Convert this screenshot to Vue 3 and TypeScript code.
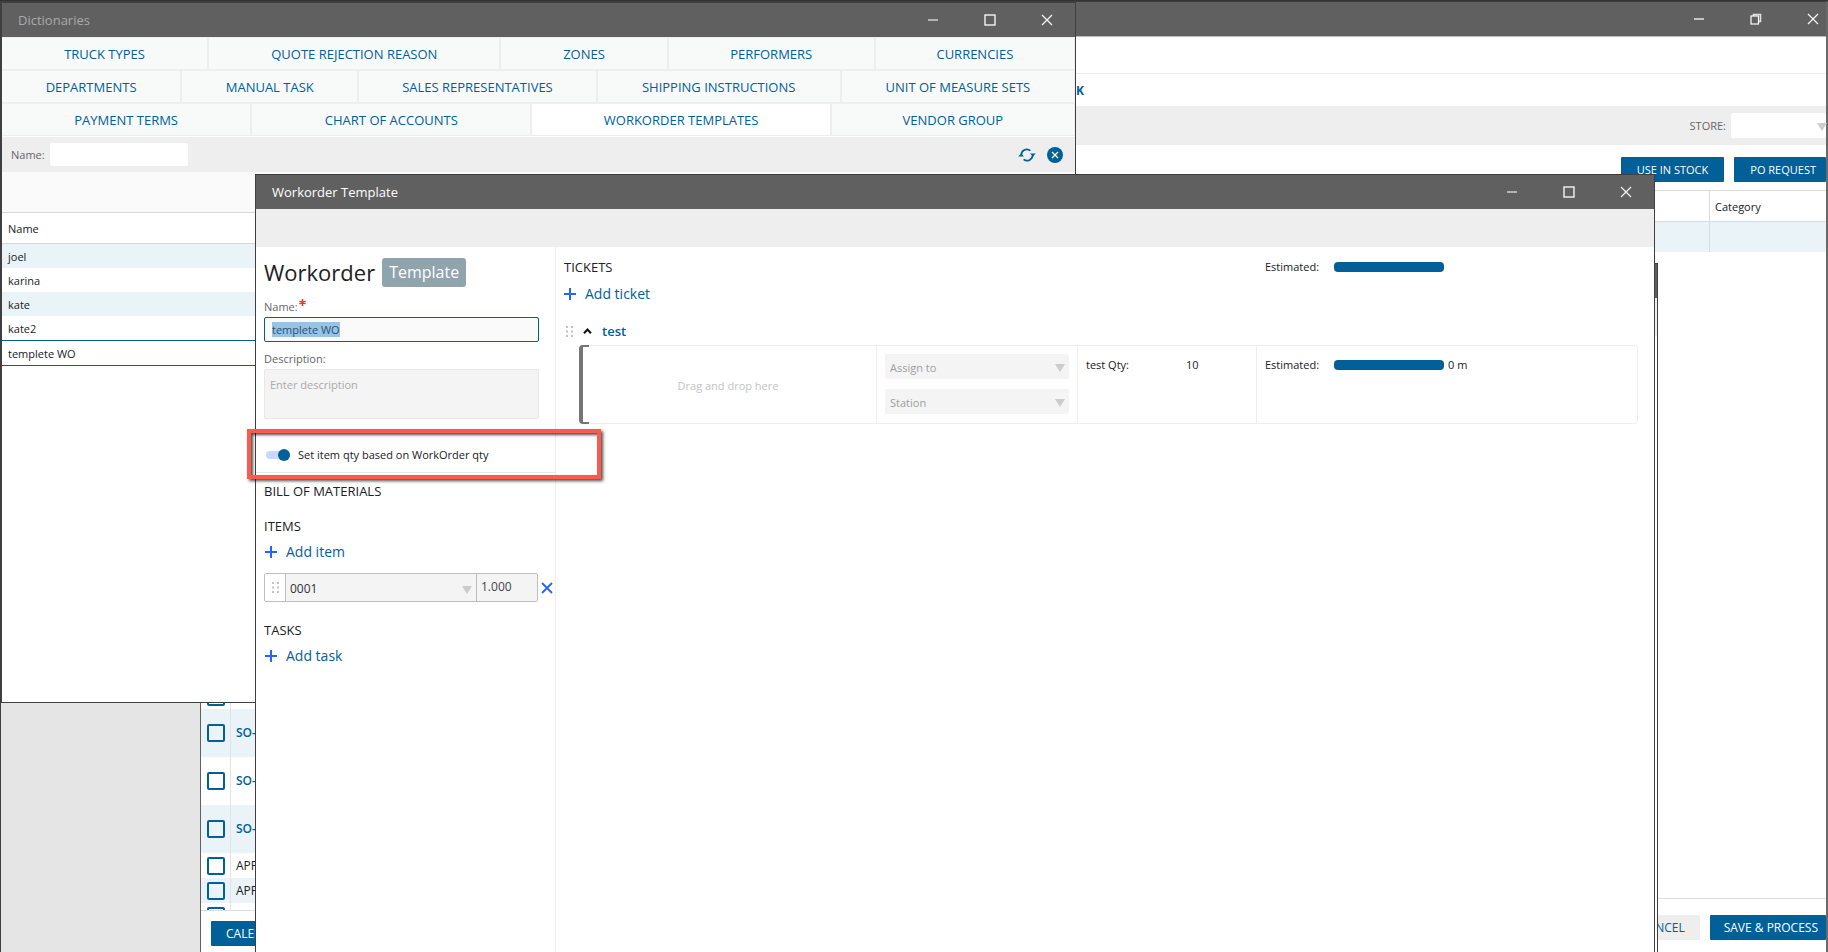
<script setup lang="ts">
import { onMounted, ref } from 'vue'

interface Tab { label: string; active?: boolean }
interface TabRow { id: string; tabs: Tab[] }

const tabRows: TabRow[] = [
  { id: 'r1', tabs: [{ label: 'TRUCK TYPES' }, { label: 'QUOTE REJECTION REASON' }, { label: 'ZONES' }, { label: 'PERFORMERS' }, { label: 'CURRENCIES' }] },
  { id: 'r2', tabs: [{ label: 'DEPARTMENTS' }, { label: 'MANUAL TASK' }, { label: 'SALES REPRESENTATIVES' }, { label: 'SHIPPING INSTRUCTIONS' }, { label: 'UNIT OF MEASURE SETS' }] },
  { id: 'r3', tabs: [{ label: 'PAYMENT TERMS' }, { label: 'CHART OF ACCOUNTS' }, { label: 'WORKORDER TEMPLATES', active: true }, { label: 'VENDOR GROUP' }] },
]

const names: string[] = ['joel', 'karina', 'kate', 'kate2', 'templete WO']

const orders = [
  { id: 1, text: '', tall: false },
  { id: 2, text: 'SO-', tall: true },
  { id: 3, text: 'SO-', tall: true },
  { id: 4, text: 'SO-', tall: true },
  { id: 5, text: 'APP', tall: false },
  { id: 6, text: 'APP', tall: false },
  { id: 7, text: '', tall: false },
]

const templateName = ref('templete WO')
const description = ref('')
const qtyBased = ref(true)
const itemQty = ref('1.000')
const filterName = ref('')
const nameInput = ref<HTMLInputElement | null>(null)

onMounted(() => {
  nameInput.value?.focus()
  nameInput.value?.select()
})
</script>

<template>
  <div class="desktop">
    <!-- Main application window -->
    <section class="window main-window" aria-label="Main window">
      <header class="titlebar">
        <span class="title"></span>
        <div class="controls">
          <button type="button" aria-label="Minimize"><svg width="12" height="12" viewBox="0 0 12 12"><path d="M1 6h10" stroke="#c4c4c4" stroke-width="2" /></svg></button>
          <button type="button" aria-label="Restore"><svg width="12" height="12" viewBox="0 0 12 12"><path d="M3.5 3V1.5h7v7H9" fill="none" stroke="#e0e0e0" stroke-width="1.6" /><rect x="1" y="3" width="7.5" height="8" fill="none" stroke="#fff" stroke-width="1.2" /></svg></button>
          <button type="button" aria-label="Close"><svg width="12" height="12" viewBox="0 0 12 12"><path d="M1 1l10 10M11 1L1 11" stroke="#f4f4f4" stroke-width="1.3" /></svg></button>
        </div>
      </header>
      <div class="menu-strip"></div>
      <nav class="main-tabs"><a href="#stock">STOCK</a></nav>
      <div class="store-bar">
        <label for="store">STORE:</label>
        <span class="select-wrap store-select">
          <select id="store"><option></option></select>
          <svg class="arrow" width="10" height="8" viewBox="0 0 10 8"><path d="M0 0h10L5 8z" /></svg>
        </span>
      </div>
      <div class="main-body">
        <aside class="side"></aside>
        <div class="orders-pane">
          <div class="orders-view">
            <table class="orders">
              <tbody>
                <tr v-for="o in orders" :key="o.id" :class="{ tall: o.tall }">
                  <td class="check"><input type="checkbox" :aria-label="'Select row ' + o.id" /></td>
                  <td class="order-id">{{ o.text }}</td>
                </tr>
              </tbody>
            </table>
          </div>
          <footer class="orders-foot"><button type="button" class="primary">CALENDAR</button></footer>
        </div>
        <div class="detail-pane">
          <div class="actions">
            <button type="button" class="primary">USE IN STOCK</button>
            <button type="button" class="primary">PO REQUEST</button>
          </div>
          <table class="stock">
            <thead><tr><th></th><th class="category">Category</th></tr></thead>
            <tbody><tr><td></td><td></td></tr></tbody>
          </table>
          <footer class="detail-foot">
            <button type="button" class="secondary">CANCEL</button>
            <button type="button" class="primary">SAVE &amp; PROCESS</button>
          </footer>
        </div>
      </div>
    </section>

    <!-- Dictionaries window -->
    <section class="window dict-window" aria-label="Dictionaries">
      <header class="titlebar">
        <span class="title dim">Dictionaries</span>
        <div class="controls">
          <button type="button" aria-label="Minimize"><svg width="12" height="12" viewBox="0 0 12 12"><path d="M1 6h10" stroke="#b4b4b4" stroke-width="2" /></svg></button>
          <button type="button" aria-label="Maximize"><svg width="12" height="12" viewBox="0 0 12 12"><rect x="1" y="1" width="10" height="10" fill="none" stroke="#f4f4f4" stroke-width="1.4" /></svg></button>
          <button type="button" aria-label="Close"><svg width="12" height="12" viewBox="0 0 12 12"><path d="M1 1l10 10M11 1L1 11" stroke="#f4f4f4" stroke-width="1.3" /></svg></button>
        </div>
      </header>
      <nav class="dict-tabs">
        <div v-for="row in tabRows" :key="row.id" class="tab-row" :class="row.id">
          <button v-for="t in row.tabs" :key="t.label" type="button" :class="{ active: t.active }">{{ t.label }}</button>
        </div>
      </nav>
      <div class="filter-bar">
        <label for="filter">Name:</label>
        <input id="filter" v-model="filterName" type="text" />
        <div class="filter-icons">
          <button type="button" aria-label="Refresh">
            <svg width="18" height="14" viewBox="0 0 18 14">
              <path d="M3.3 7.500A5.600 5.600 0 0 1 12.400 2.700M14.700 6.500A5.600 5.600 0 0 1 5.600 11.300" fill="none" stroke="#006097" stroke-width="1.7" />
              <path d="M0.2 8.600h5.800L3.100 5.600zM12 5.400h5.800L14.900 8.400z" transform="translate(0 0)" fill="#006097" />
            </svg>
          </button>
          <button type="button" aria-label="Clear">
            <svg width="16" height="16" viewBox="0 0 16 16"><circle cx="8" cy="8" r="8" fill="#006097" /><path d="M5 5l6 6M11 5l-6 6" stroke="#fff" stroke-width="1.3" /></svg>
          </button>
        </div>
      </div>
      <div class="group-area"></div>
      <table class="names">
        <thead><tr><th>Name</th></tr></thead>
        <tbody>
          <tr v-for="n in names" :key="n" :class="{ selected: n === 'templete WO' }"><td>{{ n }}</td></tr>
        </tbody>
      </table>
    </section>

    <!-- Window lying under the template editor -->
    <section class="window under-window" aria-hidden="true">
      <div class="titlebar"></div>
      <div class="tool-strip"></div>
    </section>

    <!-- Workorder template window -->
    <section class="window wo-window" aria-label="Workorder Template">
      <header class="titlebar">
        <span class="title">Workorder Template</span>
        <div class="controls">
          <button type="button" aria-label="Minimize"><svg width="12" height="12" viewBox="0 0 12 12"><path d="M1 6h10" stroke="#b4b4b4" stroke-width="2" /></svg></button>
          <button type="button" aria-label="Maximize"><svg width="12" height="12" viewBox="0 0 12 12"><rect x="1" y="1" width="10" height="10" fill="none" stroke="#f4f4f4" stroke-width="1.4" /></svg></button>
          <button type="button" aria-label="Close"><svg width="12" height="12" viewBox="0 0 12 12"><path d="M1 1l10 10M11 1L1 11" stroke="#f4f4f4" stroke-width="1.3" /></svg></button>
        </div>
      </header>
      <div class="tool-strip"></div>
      <div class="wo-body">
        <div class="wo-left">
          <div class="wo-form">
            <div class="heading"><h1>Workorder</h1><span class="badge">Template</span></div>
            <label class="field-label" for="wo-name">Name:<svg class="star" width="7" height="7" viewBox="0 0 8 8"><path d="M4 0v8M0.4 2.4l7.2 3.2M7.6 2.4L0.4 5.6" stroke="#e53935" stroke-width="1.8" /></svg></label>
            <input id="wo-name" ref="nameInput" v-model="templateName" class="name-input" type="text" />
            <label class="field-label desc-label" for="wo-desc">Description:</label>
            <textarea id="wo-desc" v-model="description" placeholder="Enter description"></textarea>
          </div>
          <div class="switch-row">
            <label class="switch"><input v-model="qtyBased" type="checkbox" /><span class="track"></span><span>Set item qty based on WorkOrder qty</span></label>
            <div class="callout"></div>
          </div>
          <div class="materials">
            <h2>BILL OF MATERIALS</h2>
            <h2 class="items-title">ITEMS</h2>
            <button type="button" class="add"><svg width="12" height="12" viewBox="0 0 12 12"><path d="M6 0v12M0 6h12" stroke="#2962ff" stroke-width="2" /></svg>Add item</button>
            <div class="item-row">
              <div class="item-box">
                <span class="grip-cell"><svg width="7" height="11" viewBox="0 0 7 11"><path d="M0 0h2v2H0zM5 0h2v2H5zM0 4.500h2v2H0zM5 4.500h2v2H5zM0 9h2v2H0zM5 9h2v2H5z" fill="#c2c2c2" /></svg></span>
                <span class="select-wrap item-select">
                  <select aria-label="Item"><option>0001</option></select>
                  <svg class="arrow" width="10" height="8" viewBox="0 0 10 8"><path d="M0 0h10L5 8z" /></svg>
                </span>
                <input v-model="itemQty" type="text" aria-label="Item quantity" />
              </div>
              <button type="button" class="remove" aria-label="Remove item"><svg width="12" height="12" viewBox="0 0 12 12"><path d="M1 1l10 10M11 1L1 11" stroke="#2962ff" stroke-width="1.8" /></svg></button>
            </div>
            <h2 class="tasks-title">TASKS</h2>
            <button type="button" class="add"><svg width="12" height="12" viewBox="0 0 12 12"><path d="M6 0v12M0 6h12" stroke="#2962ff" stroke-width="2" /></svg>Add task</button>
          </div>
        </div>
        <div class="wo-right">
          <div class="tickets-head">
            <h2>TICKETS</h2>
            <div class="estimate"><span class="est-label">Estimated:</span><span class="bar"></span></div>
          </div>
          <button type="button" class="add add-ticket"><svg width="12" height="12" viewBox="0 0 12 12"><path d="M6 0v12M0 6h12" stroke="#2962ff" stroke-width="2" /></svg>Add ticket</button>
          <div class="ticket-title">
            <svg width="7" height="11" viewBox="0 0 7 11"><path d="M0 0h2v2H0zM5 0h2v2H5zM0 4.500h2v2H0zM5 4.500h2v2H5zM0 9h2v2H0zM5 9h2v2H5z" fill="#c2c2c2" /></svg>
            <svg width="9" height="6" viewBox="0 0 9 6"><path d="M1 5.200L4.500 1.500 8 5.200" fill="none" stroke="#111" stroke-width="2" /></svg>
            <a href="#test">test</a>
          </div>
          <div class="ticket">
            <div class="drop">Drag and drop here</div>
            <div class="assign">
              <span class="select-wrap"><select aria-label="Assign to"><option>Assign to</option></select><svg class="arrow" width="10" height="8" viewBox="0 0 10 8"><path d="M0 0h10L5 8z" /></svg></span>
              <span class="select-wrap"><select aria-label="Station"><option>Station</option></select><svg class="arrow" width="10" height="8" viewBox="0 0 10 8"><path d="M0 0h10L5 8z" /></svg></span>
            </div>
            <div class="qty"><span class="qty-label">test Qty:</span><span>10</span></div>
            <div class="estimate"><span class="est-label">Estimated:</span><span class="bar"></span><span>0 m</span></div>
          </div>
        </div>
      </div>
    </section>
  </div>
</template>

<style>
body { margin: 0; }
</style>

<style scoped>
.desktop {
  position: relative;
  height: 100vh;
  overflow: hidden;
  background: #333;
  color: #212121;
  font: 11px/16px "Open Sans", "Noto Sans", sans-serif;
}
.desktop * { box-sizing: border-box; }
button, input, select, textarea { font: inherit; color: inherit; margin: 0; border-radius: 0; }
button { padding: 0; border: 0; background: none; cursor: pointer; }
a { text-decoration: none; color: #006097; }
table { border-collapse: separate; border-spacing: 0; width: 100%; }
h1, h2 { margin: 0; font-weight: 400; }
h2 { font-size: 13px; line-height: 16px; font-weight: 500; }

.window { position: absolute; display: flex; flex-direction: column; background: #fff; border: 1px solid #3f3f3f; }
.titlebar { display: flex; align-items: center; justify-content: space-between; flex: none; height: 34px; padding: 0 22px 0 16px; background: #606060; color: #fff; font-size: 13px; }
.dim { color: #aaa; }
.controls { display: flex; gap: 45px; }
.controls button, .filter-icons button { display: flex; }
.tool-strip { flex: none; height: 38px; background: #eee; }

.main-window { inset: 1px 0 0; border-width: 1px 2px 0 1px; border-right-color: #696969; }
.main-window .titlebar { padding-right: 7px; }
.menu-strip { flex: none; height: 38px; border-top: 1px solid #bbb; border-bottom: 1px solid #eee; }
.main-tabs { flex: none; width: 1083px; height: 32px; padding-top: 9px; text-align: right; font-size: 12px; font-weight: 700; }
.store-bar { display: flex; flex: none; justify-content: flex-end; align-items: center; gap: 5px; height: 39px; background: #eee; color: #666; }
.store-select { width: 95px; }
.main-body { display: flex; flex: 1; min-height: 0; }
.side { width: 200px; flex: none; background: #e5e5e5; border-right: 1px solid #606060; }
.orders-pane { display: flex; flex-direction: column; justify-content: flex-end; width: 30%; font-size: 12px; }
.orders-view { height: 226px; overflow: hidden; }
.orders td { height: 25px; padding: 0 5px; }
.orders tr.tall td { height: 48px; color: #006097; font-weight: 600; }
.orders tr:nth-child(even) { background: #eaf3f7; }
.orders td.check { width: 30px; padding: 0 5px 0 6px; border-right: 1px solid #dfe3e5; }
.orders .check input { display: block; appearance: none; width: 18px; height: 18px; border: 2px solid #006097; border-radius: 2px; }
.orders-foot { height: 42px; padding: 10px; border-top: 1px solid #ddd; }
.detail-pane { display: flex; flex-direction: column; flex: 1; }
.actions { display: flex; justify-content: flex-end; gap: 10px; padding-top: 12px; height: 45px; }
.primary, .secondary { height: 25px; padding: 0 15px; background: #006097; color: #fff; border-radius: 1px; white-space: nowrap; }
.secondary { background: #eee; color: #006097; }
.actions .primary { padding: 0 16px; }
.actions .primary:last-child { padding-right: 10px; }
.stock th { height: 32px; padding: 2px 5px 0; border: solid #d8dcde; border-width: 1px 0; text-align: left; font-weight: 400; }
.stock td { height: 30px; background: #eaf3f7; }
.stock tr > :last-child { width: 117px; border-left: 1px solid #d8dcde; }
.detail-foot { display: flex; justify-content: flex-end; gap: 10px; height: 54px; margin-top: auto; padding-top: 16px; border-top: 1px solid #ddd; font-size: 12px; }
.detail-foot .primary { padding: 0 8px 0 14px; }

.select-wrap { position: relative; display: block; }
.select-wrap select { display: block; appearance: none; width: 100%; height: 25px; padding: 2px 20px 0 5px; border: 0; border-radius: 2px; background: #f4f4f4; color: #9e9e9e; }
.arrow { position: absolute; right: 4px; top: 10px; fill: #ccc; pointer-events: none; }
.store-bar .select-wrap select { background: #fff; }
.store-bar .arrow { right: -1px; }

.dict-window { left: 1px; top: 2px; width: 1075px; height: 701px; }
.dict-tabs { display: grid; gap: 2px; flex: none; padding: 1px 1px 1px 0; background: #eee; border-bottom: 1px solid #fff; }
.tab-row { display: grid; gap: 2px; }
.r1 { grid-template-columns: 205fr 290fr 165fr 205fr 198fr; }
.r2 { grid-template-columns: 178fr 175fr 236fr 242fr 232fr; }
.r3 { grid-template-columns: 248fr 278fr 297fr 242fr; }
.tab-row button { height: 31px; background: #f8faf9; color: #006097; font-size: 13px; font-weight: 500; white-space: nowrap; }
.tab-row button.active { background: #fff; }
.filter-bar { display: flex; align-items: center; flex: none; gap: 5px; height: 35px; padding: 0 12px 0 9px; background: #eee; color: #666; }
.filter-bar input { width: 138px; height: 23px; border: 0; border-radius: 2px; background: #fff; }
.filter-icons { display: flex; align-items: center; gap: 11px; margin-left: auto; }
.group-area { flex: none; height: 40px; background: #fafafa; }
.names th { height: 32px; padding: 2px 6px 0; text-align: left; font-weight: 400; border: solid #d8d8d8; border-width: 1px 0; }
.names td { height: 24px; padding: 2px 6px 0; }
.names tbody tr:nth-child(odd) td { background: #eaf3f7; }
.names tbody tr.selected td { height: 26px; background: #fff; border: solid #006097; border-width: 1px 0; }

.under-window { left: 258px; right: 170px; top: 263px; bottom: 0; border-bottom: 0; }

.wo-window { left: 255px; right: 173px; top: 174px; bottom: 0; border-bottom: 0; }
.wo-body { display: flex; flex: 1; min-height: 0; }
.wo-left { width: 300px; flex: none; border-right: 1px solid #eee; }
.wo-form { display: flex; flex-direction: column; padding: 11px 16px 0 8px; }
.heading { display: flex; align-items: center; gap: 7px; height: 29px; }
h1 { font-size: 22px; line-height: 29px; }
.badge { padding: 0 7px; border-radius: 3px; background: #90a4ae; color: #fff; font-size: 16px; line-height: 29px; }
.field-label { display: flex; gap: 1px; margin-top: 12px; color: #666; line-height: 16px; }
.name-input { height: 25px; margin-top: 2px; padding: 0 7px; border: 1px solid #006097; border-radius: 2px; background: #fafafa; color: #666; outline: 0; }
.name-input::selection { background: #96c3e6; color: #2a5274; }
.desc-label { margin-top: 9px; }
textarea { display: block; height: 50px; margin-top: 2px; padding: 7px 5px; border: 1px solid #e8e8e8; border-radius: 2px; background: #f4f4f4; resize: none; outline: 0; }
textarea::placeholder { color: #aaa; opacity: 1; }
.switch-row { position: relative; display: flex; align-items: center; height: 38px; margin-top: 16px; padding: 2px 0 0 10px; border-bottom: 1px solid #e8e8e8; }
.switch { display: flex; align-items: center; gap: 8px; white-space: nowrap; }
.switch input { position: absolute; opacity: 0; }
.track { position: relative; width: 24px; height: 8px; border-radius: 4px; background: #c9d8ff; }
.track::after { content: ""; position: absolute; right: 0; top: -2px; width: 12px; height: 12px; border-radius: 50%; background: #006097; }
.callout { position: absolute; z-index: 2; left: -9px; top: -6px; width: 354px; height: 50px; border: 4px solid #fd5a4e; box-shadow: 2px 2px 3px rgba(0, 0, 0, .7), inset 2px 2px 3px rgba(0, 0, 0, .7); pointer-events: none; }
.materials { padding: 10px 0 0 8px; }
.items-title { margin-top: 19px; }
.add { display: flex; align-items: center; gap: 9px; height: 18px; margin-top: 9px; padding-left: 1px; color: #006097; font-size: 14px; line-height: 18px; }
.item-row { display: flex; align-items: center; gap: 3px; margin-top: 12px; font-size: 12px; }
.item-box { display: flex; width: 274px; height: 29px; border: 1px solid #bdbdbd; border-radius: 2px; background: #f4f4f4; overflow: hidden; }
.grip-cell { display: flex; align-items: center; justify-content: center; width: 21px; background: #fff; border-right: 1px solid #bdbdbd; }
.item-select { flex: 1; }
.item-select select { height: 27px; padding-left: 4px; color: #333; }
.item-select .arrow { top: 12px; }
.item-box input { width: 61px; padding: 0 4px 2px; border: 0; border-left: 1px solid #bdbdbd; background: #f4f4f4; color: #444; outline: 0; }
.remove { display: flex; }
.tasks-title { margin-top: 20px; }
.wo-right { flex: 1; min-width: 0; padding: 12px 16px 0 8px; }
.tickets-head { display: grid; grid-template-columns: 1fr 373px; }
.estimate { display: flex; align-items: center; }
.est-label { width: 69px; }
.bar { width: 110px; height: 10px; margin-right: 4px; border-radius: 4px; background: #006097; }
.add-ticket { margin-top: 10px; padding-left: 0; }
.ticket-title { display: flex; align-items: center; gap: 10px; height: 18px; margin: 19px 0 5px 2px; font-size: 13px; font-weight: 600; }
.ticket { position: relative; display: grid; grid-template-columns: 1fr 201px 179px 380px; height: 79px; margin-left: 15px; border: 1px solid #eee; border-radius: 4px; }
.ticket::before { content: ""; box-sizing: border-box; position: absolute; left: -1px; top: -1px; bottom: -1px; width: 10px; border: 2px solid #757575; border-left-width: 4px; border-right: 0; border-radius: 4px 0 0 4px; }
.drop { display: flex; align-items: center; justify-content: center; padding-top: 3px; color: #c4c4c4; }
.ticket > div { border-right: 1px solid #eee; }
.ticket > div:last-child { border-right: 0; }
.assign { display: grid; align-content: start; gap: 10px; padding: 8px; }
.qty { display: flex; padding: 11px 8px; }
.qty-label { width: 100px; }
.ticket .estimate { align-items: flex-start; padding: 11px 8px; }
.ticket .bar { margin-top: 3px; }
</style>
